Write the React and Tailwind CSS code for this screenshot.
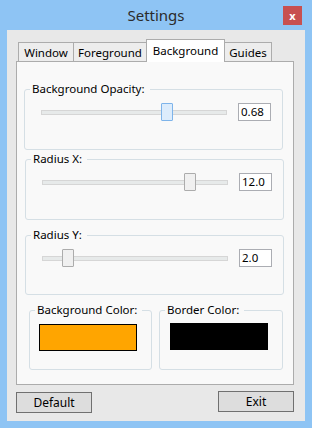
import React from "react";

const font = { fontFamily: '"Noto Sans", "Open Sans", sans-serif' };

function Tab({ label, selected, className }) {
  if (selected) {
    return (
      <div
        className={`relative z-10 -ml-px -mb-px flex h-[23px] items-start justify-center border border-b-0 border-[#acacac] bg-[#ffffff] pt-[3px] text-[11.5px] leading-[16px] text-[#000000] ${className}`}
      >
        {label}
      </div>
    );
  }
  return (
    <div
      className={`flex h-[19px] items-start justify-center border border-b-0 border-[#acacac] bg-[#ededed] pt-[2px] text-[11.5px] leading-[16px] text-[#000000] ${className}`}
    >
      {label}
    </div>
  );
}

function Slider({ value, left, active }) {
  return (
    <div className="flex items-center">
      <div className="relative ml-[16px] flex h-[18px] w-[186px] items-center">
        <div className="h-[5px] w-full border border-[#d6d6d6] bg-[#e7eaea]" />
        <div
          className={`absolute top-0 h-[18px] w-[12px] rounded-[1px] border ${
            active ? "border-[#7eb4ea] bg-[#dcecfc]" : "border-[#acacac] bg-[#f0f0f0]"
          }`}
          style={{ left: `${left}px` }}
        />
      </div>
      <div className="ml-[11px] flex h-[18px] w-[33px] items-center border border-[#abadb3] bg-[#ffffff] pl-[2px] text-[11.5px] leading-[16px] text-[#000000]">
        {value}
      </div>
    </div>
  );
}

function Group({ label, className, children }) {
  return (
    <fieldset className={`rounded-[3px] border border-[#d5dfe5] ${className}`}>
      <legend className="ml-[5px] px-[2px] pr-[5px] text-[11.5px] leading-[16px] text-[#000000]">
        {label}
      </legend>
      {children}
    </fieldset>
  );
}

export default function App() {
  return (
    <div className="flex h-[428px] w-[312px] flex-col bg-[#8ec4f4]" style={font}>
      <div className="grid h-[30px] grid-cols-[1fr_auto_1fr]">
        <div />
        <div className="pt-[5px] text-[15px] leading-[20px] text-[#2b2b2b]">Settings</div>
        <div className="flex justify-end pr-[10px] pt-[6px]">
          <div className="flex h-[19px] w-[19px] items-center justify-center bg-[#c75050] text-[11px] font-bold leading-none text-[#ffffff]">
            x
          </div>
        </div>
      </div>
      <div className="mx-[7px] flex h-[391px] flex-col bg-[#e8e8e8]">
        <div className="ml-[11px] mt-[9px] flex h-[22px] items-end">
          <Tab label="Window" className="w-[56px]" />
          <Tab label="Foreground" className="-ml-px w-[74px]" />
          <Tab label="Background" selected className="w-[79px]" />
          <Tab label="Guides" className="-ml-px w-[48px]" />
        </div>
        <div className="ml-[9px] flex h-[324px] w-[278px] flex-col border border-[#acacac] bg-[#f9f9f9]">
          <Group label="Background Opacity:" className="ml-[7px] mt-[19px] w-[259px] pb-[28px] pt-[6px]">
            <Slider value="0.68" left={120} active />
          </Group>
          <Group label="Radius X:" className="ml-[8px] mt-[1px] w-[259px] pb-[28px] pt-[6px]">
            <Slider value="12.0" left={142} />
          </Group>
          <Group label="Radius Y:" className="ml-[8px] mt-[7px] w-[259px] pb-[27px] pt-[6px]">
            <Slider value="2.0" left={20} />
          </Group>
          <div className="ml-[12px] mt-[7px] flex gap-[7px]">
            <Group label="Background Color:" className="w-[123px] pb-[18px] pt-[6px]">
              <div className="ml-[9px] h-[27px] w-[98px] border border-[#000000] bg-[#ffa500]" />
            </Group>
            <Group label="Border Color:" className="w-[124px] pb-[18px] pt-[5px]">
              <div className="ml-[10px] h-[27px] w-[98px] bg-[#000000]" />
            </Group>
          </div>
        </div>
        <div className="ml-[9px] mt-[7px] flex w-[278px] justify-between">
          <div className="flex h-[21px] w-[76px] items-center justify-center border border-[#707070] bg-[#dddddd] text-[12px] leading-[16px] text-[#000000]">
            Default
          </div>
          <div className="-mt-px flex h-[21px] w-[76px] items-center justify-center border border-[#707070] bg-[#dddddd] text-[12px] leading-[16px] text-[#000000]">
            Exit
          </div>
        </div>
      </div>
    </div>
  );
}
